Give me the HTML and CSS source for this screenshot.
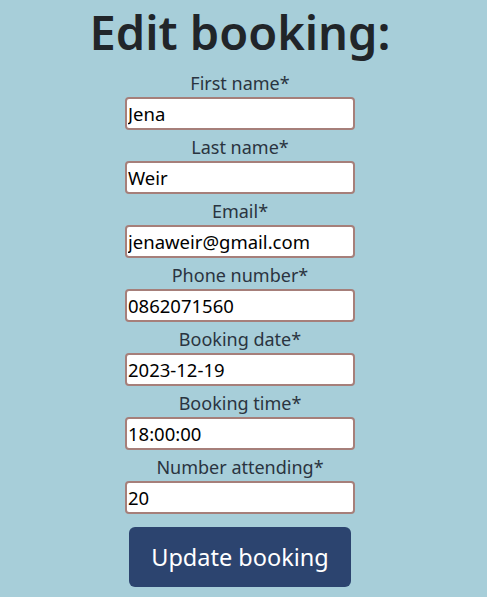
FILE: index.html
```html
<!DOCTYPE html>
<html lang="en">
<head>
<meta charset="utf-8">
<title>Edit booking</title>
<link rel="stylesheet" href="styles.css">
</head>
<body>
<main class="page">
  <h1 class="title">Edit booking:</h1>
  <form class="form">
    <div class="field">
      <label class="label" for="fn">First name*</label>
      <input class="input" id="fn" type="text" value="Jena">
    </div>
    <div class="field">
      <label class="label" for="ln">Last name*</label>
      <input class="input" id="ln" type="text" value="Weir">
    </div>
    <div class="field">
      <label class="label" for="em">Email*</label>
      <input class="input" id="em" type="text" value="jenaweir@gmail.com">
    </div>
    <div class="field">
      <label class="label" for="ph">Phone number*</label>
      <input class="input" id="ph" type="text" value="0862071560">
    </div>
    <div class="field">
      <label class="label" for="bd">Booking date*</label>
      <input class="input" id="bd" type="text" value="2023-12-19">
    </div>
    <div class="field">
      <label class="label" for="bt">Booking time*</label>
      <input class="input" id="bt" type="text" value="18:00:00">
    </div>
    <div class="field">
      <label class="label" for="na">Number attending*</label>
      <input class="input" id="na" type="text" value="20">
    </div>
    <button class="btn" type="button">Update booking</button>
  </form>
</main>
</body>
</html>
```
FILE: styles.css
```css
html, body {
  margin: 0;
  padding: 0;
}
body {
  background: #a7ced9;
  font-family: "Noto Sans", "Open Sans", sans-serif;
  color: #212529;
}
.page {
  display: flex;
  flex-direction: column;
  align-items: center;
  padding-right: 7px;
}
.title {
  margin: 0;
  font-size: 47px;
  font-weight: 600;
  line-height: 64px;
  letter-spacing: 0;
}
.form {
  display: flex;
  flex-direction: column;
  align-items: center;
  margin-top: 5px;
}
.field {
  display: flex;
  flex-direction: column;
  align-items: center;
  margin-bottom: 3px;
}
.label {
  font-size: 18px;
  line-height: 28px;
  color: #2a3440;
}
.input {
  box-sizing: border-box;
  width: 230px;
  height: 33px;
  margin: 0;
  padding: 0 1px;
  border: 2px solid #a67f7a;
  border-radius: 4px;
  background: #fff;
  font-family: "Noto Sans", "Open Sans", sans-serif;
  font-size: 18.5px;
  color: #000;
  outline: none;
}
.btn {
  box-sizing: border-box;
  width: 222px;
  height: 60px;
  margin-top: 10px;
  border: 0;
  border-radius: 6px;
  background: #2c446f;
  color: #fff;
  font-family: "Noto Sans", "Open Sans", sans-serif;
  font-size: 23.5px;
  cursor: pointer;
}
```
